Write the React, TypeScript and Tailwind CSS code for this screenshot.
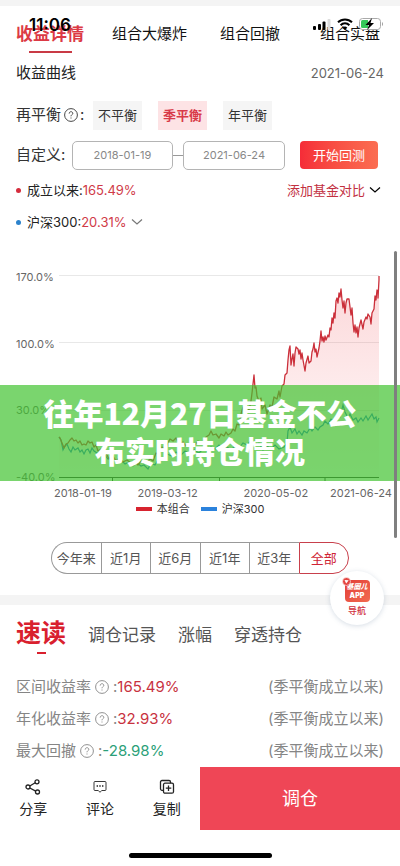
import React from "react";

const portfolio =
  "0,162 1,163 3,168 5,173 7,169 9,168 11,165 13,163 15,166 17,165 19,168 21,166 23,170 25,169 27,170 29,166 31,168 33,167 35,172 37,170 39,176 42,174 44,180 47,178 50,184 54,181 57,186 60,183 64,187 68,185 72,188 76,186 79,190 82,186 85,188 88,187 91,184 94,186 97,178 100,180 103,172 106,174 109,168 111,164 114,166 117,163 120,169 124,167 127,171 131,168 135,171 139,166 143,168 147,162 150,160 152,156 154,160 157,159 160,163 162,159 165,161 167,157 169,160 172,158 174,154 176,156 178,149 180,150 182,139 184,132 186,137 188,131 190,135 192,126 193,118 195,100 196,113 197,112 198,121 200,126 202,123 203,134 206,130 208,139 211,130 213,132 215,122 218,124 220,116 221,122 223,111 225,109 226,104 228,104 229,91 230,75 231,71 232,90 233,84 234,80 235,91 236,84 237,72 239,74 240,78 242,76 243,84 244,79 245,86 247,80 248,96 249,90 251,82 252,87 255,85 257,76 258,69 259,77 261,81 263,71 264,60 265,57 266,66 267,63 268,67 270,62 271,66 273,61 274,63 276,55 277,57 278,44 279,48 280,42 281,46 282,35 283,23 284,27 285,23 286,26 287,18 288,22 289,15 290,16 291,33 292,27 293,37 295,24 298,23 299,34 300,39 301,30 302,42 303,56 304,50 305,60 306,53 307,61 308,54 309,62 310,53 312,54 313,45 314,52 316,52 317,45 318,40";

const recentRally = [
  [195, 100], [196, 113], [197, 112], [198, 121], [200, 126], [202, 123], [203, 134], [206, 130], [208, 139],
  [211, 130], [213, 132], [215, 122], [218, 124], [220, 116], [221, 122], [223, 111], [225, 109], [226, 100],
  [228, 98], [229, 85], [230, 75], [231, 71], [232, 90], [233, 84], [234, 79], [235, 91], [236, 78], [237, 72],
  [239, 74], [240, 79], [241, 75], [242, 84], [243, 78], [244, 85], [246, 96], [247, 88], [249, 81], [250, 88],
  [252, 86], [253, 77], [254, 74], [255, 68], [256, 77], [257, 74], [258, 82], [260, 73], [261, 66], [262, 56],
  [263, 66], [264, 62], [265, 67], [266, 61], [267, 65], [269, 60], [270, 62], [271, 53], [272, 55], [273, 43],
  [274, 48], [275, 38], [276, 43], [277, 26], [278, 23], [279, 28], [280, 18], [281, 22], [282, 14], [283, 25],
  [284, 33], [285, 26], [286, 38], [287, 28], [288, 24], [290, 24], [291, 32], [292, 40], [293, 33], [294, 48],
  [295, 57], [296, 50], [297, 58], [298, 52], [299, 62], [300, 53], [302, 45], [304, 54], [305, 47], [307, 42],
  [308, 44], [309, 39], [311, 42], [312, 49], [313, 38], [315, 34], [316, 21], [317, 25], [318, 15], [319, 17],
  [319, 23], [320, 5], [320, 1],
];

const portfolioPoints =
  portfolio.slice(0, portfolio.indexOf(" 195,")) + " " + recentRally.map((p) => p.join(",")).join(" ");

const index =
  "0,162 2,165 4,175 6,171 8,169 10,174 12,177 14,172 16,175 19,173 21,177 23,175 25,179 27,175 29,174 31,178 33,173 35,176 38,178 41,181 45,179 49,184 53,182 57,187 62,185 66,189 70,187 74,191 78,188 82,191 85,190 89,194 92,188 96,190 100,183 104,185 108,179 113,181 117,177 122,180 126,176 131,179 135,175 140,178 144,174 148,176 152,172 156,174 160,170 164,174 168,172 172,175 176,171 180,173 184,168 188,170 192,165 195,171 200,168 204,175 208,171 212,174 216,170 220,174 225,172 228,168 229,156 231,152 233,158 236,154 238,159 240,156 243,160 245,156 248,158 251,153 253,156 256,152 259,155 261,152 264,150 266,146 269,149 272,144 275,146 278,140 281,142 284,130 286,137 289,143 291,139 294,145 297,143 299,147 302,143 304,146 307,141 309,145 311,142 313,139 315,144 317,142 318,147 320,143";

function Help({ size }: { size: number }) {
  return (
    <svg width={size} height={size} viewBox="0 0 14 14" fill="none" stroke="currentColor" aria-hidden="true">
      <circle cx="7" cy="7" r="6.4" strokeWidth="0.9" />
      <path d="M5.2 5.6C5.2 4.4 6 3.7 7 3.7s1.8.7 1.8 1.7C8.800 6.600 7 6.700 7 8.300M7 9.500v1" strokeWidth="0.9" />
    </svg>
  );
}

function Chevron() {
  return (
    <svg width="12" height="8" viewBox="0 0 12 8" fill="none" stroke="currentColor" strokeWidth="1.2" aria-hidden="true">
      <path d="M1 1.500 6 6l5-4.500" />
    </svg>
  );
}

function StatusBar() {
  return (
    <div className="pointer-events-none absolute inset-x-0 top-4 flex h-5 items-start justify-between pl-[29px] pr-4">
      <span className="text-[17px] leading-[18px] font-semibold text-black">11:06</span>
      <div className="mt-[2px] flex gap-[6px]">
        <svg width="18" height="12" viewBox="0 0 18 12" aria-hidden="true">
          <rect x="0" y="8" width="3" height="4" rx="1" />
          <rect x="5" y="6" width="3" height="6" rx="1" />
          <rect x="9.500" y="3.500" width="3" height="8.500" rx="1" />
          <rect x="14.500" y="1" width="3" height="11" rx="1" fill="#dcdcdc" />
        </svg>
        <svg width="16" height="12" viewBox="0 0 16 12" fill="none" stroke="#000" strokeWidth="2" aria-hidden="true">
          <path d="M1 4.300a10 10 0 0 1 14 0M3.600 7.200a6.200 6.200 0 0 1 8.800 0" />
          <path d="M8 12 5.700 9.700a3.300 3.300 0 0 1 4.600 0Z" fill="#000" stroke="none" />
        </svg>
        <svg width="25" height="12" viewBox="0 0 25 12" aria-hidden="true">
          <rect x="0.500" y="0.500" width="21" height="11" rx="3" fill="#fff" stroke="#aaa" />
          <path d="M3.500 2H9v8H3.500A1.500 1.500 0 0 1 2 8.500v-5A1.500 1.500 0 0 1 3.500 2Z" fill="#34c759" />
          <path d="M13 0 6.500 7H10l-2 5 7-7h-3.500Z" fill="#000" />
          <path d="M23 4v4c1.300-.6 1.300-3.400 0-4Z" fill="#999" />
        </svg>
      </div>
    </div>
  );
}

const rebalances = ["不平衡", "季平衡", "年平衡"];
const ranges = ["今年来", "近1月", "近6月", "近1年", "近3年"];
const stats = [
  { name: "区间收益率", value: "165.49%", color: "text-[#c8323f]" },
  { name: "年化收益率", value: "32.93%", color: "text-[#c8323f]" },
  { name: "最大回撤", value: "-28.98%", color: "text-[#2b9f78]" },
];

function Chart() {
  return (
    <section className="relative pt-9" aria-label="收益曲线图">
      <div className="flex h-[216px] pl-4 pr-[21px]">
        <div className="flex w-[43px] flex-col justify-between text-[11px] leading-4 text-[#666]">
          <span>170.0%</span>
          <span>100.0%</span>
          <span>30.0%</span>
          <span>-40.0%</span>
        </div>
        <svg className="mt-[6px] h-[203px] min-w-0 flex-1 overflow-visible" viewBox="0 0 320 203" preserveAspectRatio="none" fill="none">
          <defs>
            <linearGradient id="rise" x1="0" y1="0" x2="0" y2="1">
              <stop offset="0" stopColor="#f04850" stopOpacity="0.22" />
              <stop offset="1" stopColor="#f04850" stopOpacity="0.02" />
            </linearGradient>
          </defs>
          <path d="M0 .5H320M0 67.500H320M0 135.500H320" stroke="#e8e8e8" />
          <polygon points={`0,203 ${portfolioPoints} 320,203`} fill="url(#rise)" />
          <path d="M0 202.500H320M53.500 203v3M160.500 203v3M266 203v3" stroke="#333" />
          <polyline points={index} stroke="#2378c8" strokeWidth="1.200" />
          <polyline points={portfolioPoints} stroke="#cb2f3a" strokeWidth="1.300" strokeLinejoin="round" />
        </svg>
      </div>
      <div className="flex justify-between pl-[54px] pr-2 text-[11px] leading-4 text-[#666]">
        <span>2018-01-19</span>
        <span className="ml-1">2019-03-12</span>
        <span className="ml-6">2020-05-02</span>
        <span>2021-06-24</span>
      </div>
      <div className="flex justify-center gap-[11px] text-[11px] leading-4 text-[#333]">
        <span className="flex items-center gap-[5px]">
          <i className="h-1 w-4 bg-[#d7232f]" />
          本组合
        </span>
        <span className="flex items-center gap-[5px]">
          <i className="h-1 w-4 bg-[#2b82dc]" />
          沪深300
        </span>
      </div>
      <h1 className="absolute inset-x-0 top-[152px] h-24 bg-[#41c330]/70 pt-2 text-center font-['Noto_Sans_CJK_SC',sans-serif] text-[30px] leading-[38px] font-black text-white">
        往年12月27日基金不公
        <br />
        布实时持仓情况
      </h1>
    </section>
  );
}

export default function App() {
  return (
    <main className="relative bg-white font-[Inter,'Noto_Sans_CJK_SC',sans-serif] text-[#222]">
      <div className="h-[6px] bg-[#f4f4f4]" />
      <nav className="flex h-[51px] items-start pl-4 pt-4 text-[15px] leading-6 whitespace-nowrap text-[#111]">
        <button className="flex flex-col items-center text-[17px] leading-6 font-bold text-[#dc3a45]">
          收益详情
          <i className="mt-[5px] h-[2px] w-[43px] bg-[#c93a45]" />
        </button>
        <button className="ml-7">组合大爆炸</button>
        <button className="ml-[33px]">组合回撤</button>
        <button className="ml-10">组合实盘</button>
      </nav>
      <StatusBar />

      <div className="flex h-8 items-center justify-between px-4">
        <h2 className="text-[15px] leading-5">收益曲线</h2>
        <time className="text-[13px] leading-5 text-[#666]">2021-06-24</time>
      </div>

      <div className="flex h-[52px] items-center px-4">
        <span className="flex w-[77px] items-center gap-[3px] text-[15px] leading-5 text-[#333]">
          再平衡
          <span className="flex items-center gap-[2px]">
            <Help size={14} />:
          </span>
        </span>
        <div className="flex gap-4">
          {rebalances.map((name) => (
            <button
              key={name}
              className={
                name === "季平衡"
                  ? "h-[29px] w-[49px] bg-[#fde3e5] text-[13px] leading-5 font-bold text-[#d83a48]"
                  : "h-[29px] w-[49px] bg-[#f5f5f5] text-[13px] leading-5 text-[#333]"
              }
            >
              {name}
            </button>
          ))}
        </div>
      </div>

      <div className="flex h-7 items-center pl-4 pr-[22px]">
        <label htmlFor="from" className="w-14 text-[15px] leading-5 text-[#333]">
          自定义:
        </label>
        <input
          id="from"
          defaultValue="2018-01-19"
          className="h-[29px] w-[101px] rounded-[5px] border border-[#b4b4b4] text-center text-[11px] text-[#888]"
        />
        <i className="h-px w-[10px] bg-[#999]" />
        <input
          aria-label="结束日期"
          defaultValue="2021-06-24"
          className="h-[29px] w-[102px] rounded-[5px] border border-[#b4b4b4] text-center text-[11px] text-[#888]"
        />
        <button className="ml-auto h-7 w-[78px] rounded-[4px] bg-linear-to-r from-[#f52c38] to-[#fb6d51] text-[13px] leading-5 text-white">
          开始回测
        </button>
      </div>

      <div className="flex h-[42px] items-center px-4 text-[13px] leading-5">
        <i className="mr-[6px] size-[5px] rounded-full bg-[#d52c3c]" />
        成立以来:<span className="text-[#d03a48]">165.49%</span>
        <button className="ml-auto mr-[3px] flex items-center gap-1 text-[#c2303f]">
          添加基金对比
          <span className="text-black">
            <Chevron />
          </span>
        </button>
      </div>
      <button className="flex h-[22px] items-center px-4 text-[13px] leading-5">
        <i className="mr-[6px] size-[5px] rounded-full bg-[#2b82cc]" />
        沪深300:<span className="mr-[5px] text-[#d03a48]">20.31%</span>
        <span className="text-[#777]">
          <Chevron />
        </span>
      </button>

      <Chart />

      <div className="mx-[51px] mt-[25px] flex h-8 text-[13px] leading-5 text-[#555]">
        {ranges.map((name) => (
          <button
            key={name}
            className="min-w-0 flex-1 border-y border-l border-[#999] whitespace-nowrap first:rounded-l-full"
          >
            {name}
          </button>
        ))}
        <button className="min-w-0 flex-1 rounded-r-full border border-[#c8404c] text-[#cf2535]">全部</button>
      </div>

      <div className="mt-[21px] h-[10px] bg-[#f4f4f4]" />

      <nav className="flex h-[66px] items-start pl-4 pt-3 text-[17px] leading-6 whitespace-nowrap text-[#555]">
        <button className="flex flex-col items-center text-[25px] leading-8 font-bold text-[#d9202e]">
          速读
          <i className="mt-[3px] h-[2px] w-[9px] bg-[#d9202e]" />
        </button>
        <button className="ml-[22px] mt-[6px]">调仓记录</button>
        <button className="ml-[22px] mt-[6px]">涨幅</button>
        <button className="ml-[22px] mt-[6px]">穿透持仓</button>
      </nav>

      <dl className="px-4 text-[15px] text-[#858585]">
        {stats.map((s) => (
          <div key={s.name} className="flex h-8 items-center">
            <dt className="flex items-center gap-1">
              {s.name}
              <Help size={14} />
              <span>:</span>
            </dt>
            <dd className={s.color}>{s.value}</dd>
            <dd className="ml-auto">(季平衡成立以来)</dd>
          </div>
        ))}
      </dl>

      <footer>
        <div className="flex h-[63px] text-[14px] leading-5 text-[#222]">
          <div className="flex w-1/2">
            <button className="flex flex-1 flex-col items-center gap-1 pt-3">
              <svg width="16" height="16" viewBox="0 0 16 16" fill="none" stroke="currentColor" strokeWidth="1.300" aria-hidden="true">
                <circle cx="3" cy="8" r="2" />
                <circle cx="12" cy="2.800" r="2" />
                <circle cx="12.500" cy="13" r="2" />
                <path d="M4.800 7 10.200 3.800M4.800 9l5.900 3.100" />
              </svg>
              分享
            </button>
            <button className="flex flex-1 flex-col items-center gap-1 pt-3">
              <svg width="16" height="16" viewBox="0 0 16 16" fill="none" stroke="currentColor" strokeWidth="0.900" aria-hidden="true">
                <path d="M3 2.500h10a1 1 0 0 1 1 1v7a1 1 0 0 1-1 1H9.700L8 13.300 6.300 11.500H3a1 1 0 0 1-1-1v-7a1 1 0 0 1 1-1Z" />
                <path d="M4.600 7h1.400M7.300 7h1.400M10 7h1.400" strokeWidth="1.400" />
              </svg>
              评论
            </button>
            <button className="flex flex-1 flex-col items-center gap-1 pt-3">
              <svg width="16" height="16" viewBox="0 0 16 16" fill="none" stroke="currentColor" strokeWidth="1.300" aria-hidden="true">
                <rect x="4.500" y="4.200" width="10" height="10" rx="1.500" />
                <path d="M4.500 11.300H3A1.500 1.500 0 0 1 1.500 9.800V3A1.500 1.500 0 0 1 3 1.500h7A1.500 1.500 0 0 1 11.500 3v1.200M9.500 6.500v5.500M6.800 9.200h5.500" />
              </svg>
              复制
            </button>
          </div>
          <button className="w-1/2 bg-[#ef4656] text-[18px] leading-6 text-white">调仓</button>
        </div>
        <div className="flex h-9 items-end justify-center pb-2">
          <i className="h-[5px] w-[143px] rounded-full bg-black" />
        </div>
      </footer>

      <div className="absolute top-[251px] right-[3px] h-[287px] w-[3px] rounded-full bg-[#7f7f7f]" />
      <button className="absolute top-[571px] right-4 flex size-[54px] flex-col items-center rounded-full bg-white pt-[9px] text-[9px] leading-3 font-medium text-[#d0303c] shadow-[0_1px_5px_rgba(90,120,150,0.25)]">
        <span className="relative flex h-[22px] w-[25px] flex-col items-center justify-center rounded-[4px] bg-linear-to-br from-[#e23b38] to-[#f26a50] text-[7px] leading-[9px] font-black text-white italic">
          <span className="whitespace-nowrap">基圈儿</span>
          <span className="not-italic">APP</span>
          <svg className="absolute -top-[3px] -left-[3px]" width="9" height="9" viewBox="0 0 9 9" aria-hidden="true">
            <circle cx="4.500" cy="4.500" r="4" fill="#e44542" stroke="#fff" strokeWidth="0.600" />
            <path d="m2.500 3 4.200.3L4.200 6.500Z" fill="#fff" />
          </svg>
        </span>
        <span className="mt-[3px]">导航</span>
      </button>
    </main>
  );
}
